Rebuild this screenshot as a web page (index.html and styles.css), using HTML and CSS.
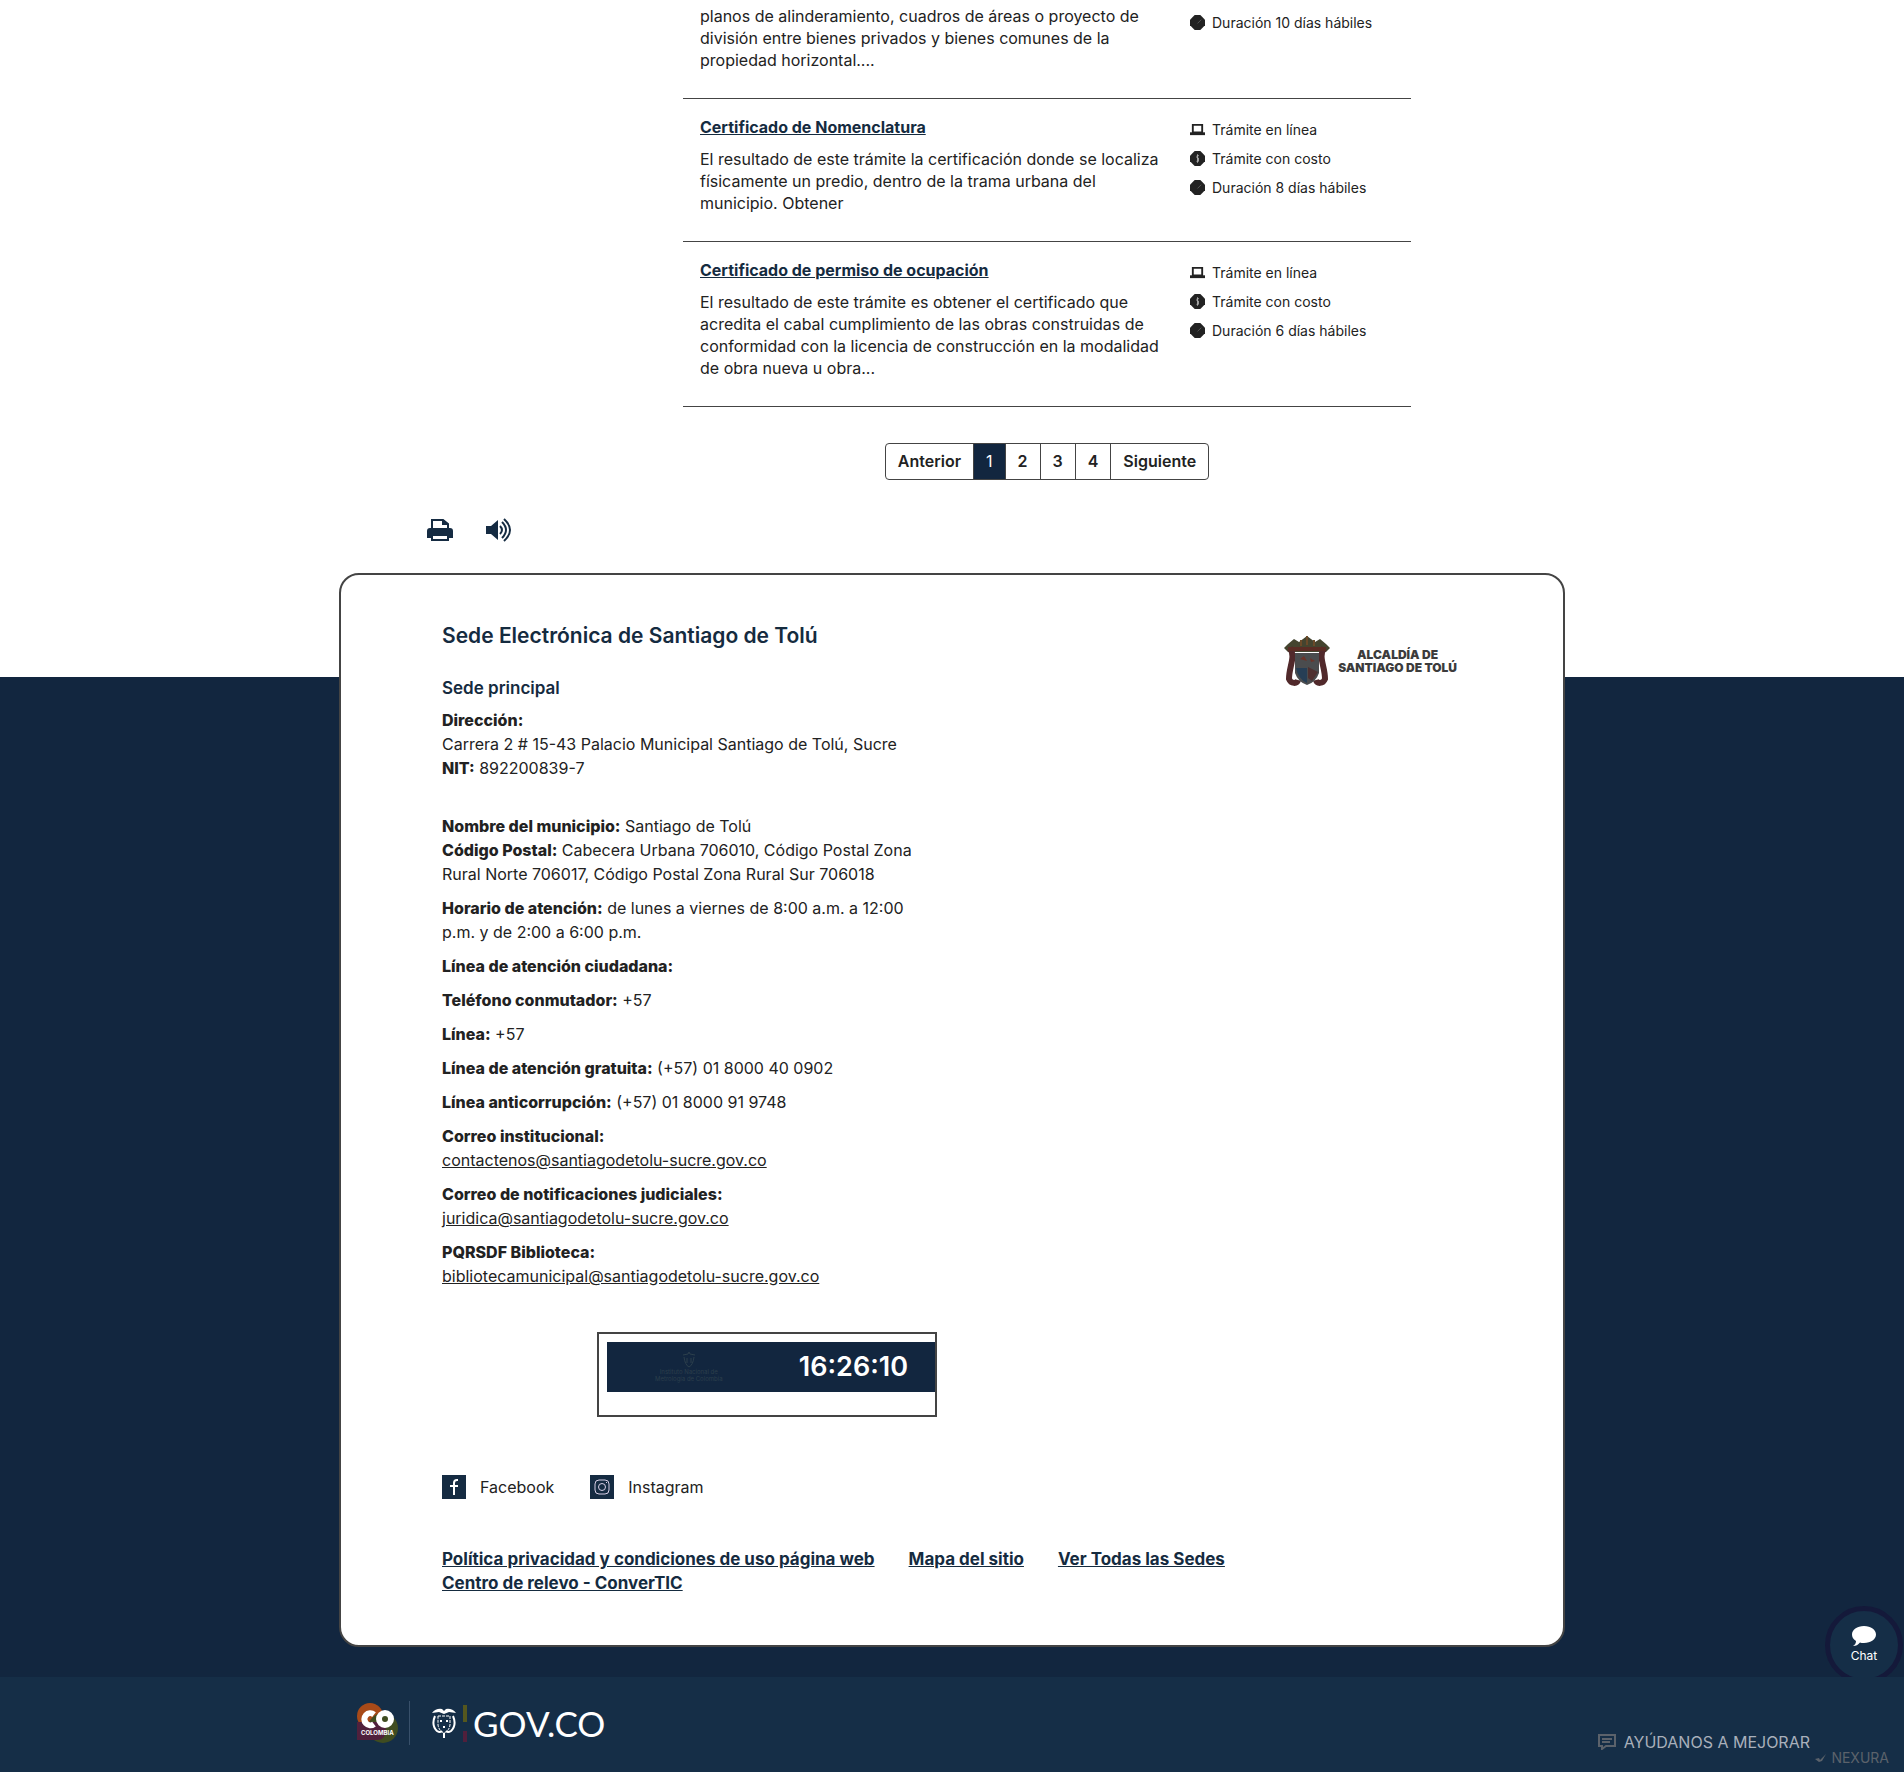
FILE: index.html
```html
<!DOCTYPE html>
<html lang="es">
<head>
<meta charset="utf-8">
<meta name="viewport" content="width=device-width, initial-scale=1">
<title>Trámites - Santiago de Tolú</title>
<link rel="stylesheet" href="styles.css">
</head>
<body>
<svg class="sprite" aria-hidden="true">
  <symbol id="laptop" viewBox="0 0 16 16"><path d="M3 3h10v8H3z" fill="none" stroke="currentColor" stroke-width="2"/><path d="M0 11h16v3H0z"/></symbol>
  <symbol id="cost" viewBox="0 0 16 16"><path d="M5 0h6l5 5v6l-5 5H5l-5-5V5z"/><path d="M9.500 5H7.500v2.500h1.500V11H7M8 3.500v9" fill="none" stroke="#aaa"/></symbol>
  <symbol id="clock" viewBox="0 0 16 16"><path d="M5 0h6l5 5v6l-5 5H5l-5-5V5z"/><path d="M8 9l4-4" fill="none" stroke="#555"/></symbol>
</svg>
<main class="container">
  <div class="results">
    <article class="item item-first">
      <p class="item-text">planos de alinderamiento, cuadros de áreas o proyecto de<br>división entre bienes privados y bienes comunes de la<br>propiedad horizontal....</p>
      <ul class="meta"><li><svg><use href="#clock"/></svg>Duración 10 días hábiles</li></ul>
    </article>
    <article class="item">
      <div>
        <h3 class="item-title"><a href="#">Certificado de Nomenclatura</a></h3>
        <p class="item-text">El resultado de este trámite la certificación donde se localiza<br>físicamente un predio, dentro de la trama urbana del<br>municipio. Obtener</p>
      </div>
      <ul class="meta">
        <li><svg><use href="#laptop"/></svg>Trámite en línea</li>
        <li><svg><use href="#cost"/></svg>Trámite con costo</li>
        <li><svg><use href="#clock"/></svg>Duración 8 días hábiles</li>
      </ul>
    </article>
    <article class="item">
      <div>
        <h3 class="item-title"><a href="#">Certificado de permiso de ocupación</a></h3>
        <p class="item-text">El resultado de este trámite es obtener el certificado que<br>acredita el cabal cumplimiento de las obras construidas de<br>conformidad con la licencia de construcción en la modalidad<br>de obra nueva u obra...</p>
      </div>
      <ul class="meta">
        <li><svg><use href="#laptop"/></svg>Trámite en línea</li>
        <li><svg><use href="#cost"/></svg>Trámite con costo</li>
        <li><svg><use href="#clock"/></svg>Duración 6 días hábiles</li>
      </ul>
    </article>
    <nav class="pager" aria-label="Paginación">
      <a href="#">Anterior</a><a href="#" class="current" aria-current="page">1</a><a href="#">2</a><a href="#">3</a><a href="#">4</a><a href="#">Siguiente</a>
    </nav>
  </div>
  <div class="tools">
    <button type="button" aria-label="Imprimir"><svg viewBox="0 0 26 24"><path d="M5 11V2h11l5 4v5" fill="none" stroke="currentColor" stroke-width="2"/><path d="M15 1v6h7z"/><path d="M3 10h20q3 0 3 3v7h-5v-3H5v3H0v-7q0-3 3-3z"/><path d="M5 17h16v5H5z" fill="#fff" stroke="currentColor" stroke-width="2"/></svg></button>
    <button type="button" aria-label="Escuchar"><svg viewBox="0 0 26 24"><path d="M0 8h5l7-6v20l-7-6H0z"/><path d="M14 8q4 4 0 8M16 4q8 8 0 16M18 1q12 11 0 22" fill="none" stroke="currentColor" stroke-width="2"/></svg></button>
  </div>
</main>
<footer class="footer">
  <section class="card">
    <div class="card-head">
      <h2>Sede Electrónica de Santiago de Tolú</h2>
      <div class="city-logo">
        <svg viewBox="0 0 46 50" aria-hidden="true"><path d="M4 8l6-5 5 3 4-3 4-3 4 3 4 3 5-3 6 5 4 4-4 4H4l-4-4z" fill="#44442f"/><path d="M6 12c6 9-1 18-1 31 2 5 8 5 9 1M40 12c-6 9 1 18 1 31-2 5-8 5-9 1" fill="none" stroke="#51292b" stroke-width="6"/><path d="M4 13h38" stroke="#5a2c24" stroke-width="4"/><path d="M11 17h24v20q-3 9-12 12-9-3-12-12z" fill="#4a4c4e"/><path d="M12 32h11v15q-9-4-11-15z" fill="#263e55"/><path d="M24 31l10 5-6 9-4-3z" fill="#4e3030"/><path d="M16 23l4-3 3 5zM26 22l5 3-4 1z" fill="#6b342a"/><path d="M23 0v9M17 4v6M30 4v6" stroke="#6b4a29" stroke-width="2"/></svg>
        <p>ALCALDÍA DE<br>SANTIAGO DE TOLÚ</p>
      </div>
    </div>
    <div class="info">
      <h3>Sede principal</h3>
      <p class="address"><b>Dirección:</b><br>Carrera 2 # 15-43 Palacio Municipal Santiago de Tolú, Sucre<br><b>NIT:</b> 892200839-7</p>
      <p><b>Nombre del municipio:</b> Santiago de Tolú<br><b>Código Postal:</b> Cabecera Urbana 706010, Código Postal Zona<br>Rural Norte 706017, Código Postal Zona Rural Sur 706018</p>
      <p><b>Horario de atención:</b> de lunes a viernes de 8:00 a.m. a 12:00<br>p.m. y de 2:00 a 6:00 p.m.</p>
      <p><b>Línea de atención ciudadana:</b></p>
      <p><b>Teléfono conmutador:</b> +57</p>
      <p><b>Línea:</b> +57</p>
      <p><b>Línea de atención gratuita:</b> (+57) 01 8000 40 0902</p>
      <p><b>Línea anticorrupción:</b> (+57) 01 8000 91 9748</p>
      <p><b>Correo institucional:</b><br><a href="#">contactenos@santiagodetolu-sucre.gov.co</a></p>
      <p><b>Correo de notificaciones judiciales:</b><br><a href="#">juridica@santiagodetolu-sucre.gov.co</a></p>
      <p><b>PQRSDF Biblioteca:</b><br><a href="#">bibliotecamunicipal@santiagodetolu-sucre.gov.co</a></p>
      <div class="clock-frame">
        <div class="clock">
          <div class="institute"><svg viewBox="0 0 14 16" aria-hidden="true"><path d="M1 3l5-1 1-2 1 2 5 1M2 5q1 8 5 10 4-2 5-10M5 6v5M9 6v5" fill="none" stroke="currentColor"/></svg><span>Instituto Nacional de<br>Metrología de Colombia</span></div>
          <time>16:26:10</time>
        </div>
      </div>
    </div>
    <div class="social">
      <a href="#"><svg viewBox="0 0 24 24" aria-hidden="true"><path fill="#152b42" d="M0 0h24v24H0z"/><path d="M16 5h-1q-3 0-3 3v12M8 11h8" fill="none" stroke="#fff" stroke-width="2"/></svg>Facebook</a>
      <a href="#"><svg viewBox="0 0 24 24" aria-hidden="true"><path fill="#152b42" d="M0 0h24v24H0z"/><g fill="none" stroke="#d8cfe6"><rect x="5" y="5" width="14" height="14" rx="4"/><circle cx="12" cy="12" r="3.500"/><path d="M16 7.500h1"/></g></svg>Instagram</a>
    </div>
    <nav class="links" aria-label="Enlaces de la sede">
      <a href="#">Política privacidad y condiciones de uso página web</a>
      <a href="#">Mapa del sitio</a>
      <a href="#">Ver Todas las Sedes</a>
      <a href="#">Centro de relevo - ConverTIC</a>
    </nav>
  </section>
  <button type="button" class="chat"><svg viewBox="0 0 24 20" aria-hidden="true"><path d="M12 0c7 0 12 4 12 8.500S19 17 12 17c-2 0-3 0-4-.5C6 19 4 20 1 20c2-1 3-3 3-5-3-2-4-4-4-6.500C0 4 5 0 12 0z"/></svg>Chat</button>
  <div class="govbar">
    <div class="container gov">
      <svg class="co" viewBox="0 0 42 42" role="img" aria-label="CO Colombia"><circle cx="14" cy="14" r="13" fill="#a84a18"/><circle cx="27" cy="26" r="15" fill="#3f4c20"/><path d="M1 20h20q9 0 9 9-1 9-9 9H1z" fill="#50203c"/><g fill="none" stroke="#fff" stroke-width="6"><path d="M18 12.500a6 6 0 1 0 0 9.500"/><circle cx="29" cy="17" r="6"/></g><text x="5" y="33" class="co-text">COLOMBIA</text></svg>
      <span class="divider"></span>
      <svg class="arms" viewBox="0 0 26 32" aria-hidden="true"><path d="M1 6Q5 1 11 2l2 2 2-2q6-1 10 4l-7-1-5 2-5-2z" fill="#fff"/><g fill="none" stroke="#fff" stroke-width="2"><path d="M4 9q-4 9 2 15 3 2 5 0M22 9q4 9-2 15-3 2-5 0"/><path d="M7 9h12v9q-1 6-6 8-5-2-6-8z" stroke-dasharray="3 1" stroke-width="1"/><path d="M9 14h2m4 0h2M12 20h2M13 26v5"/></g></svg>
      <span class="flag"></span>
      <span class="gov-name">GOV.CO</span>
    </div>
    <a class="improve" href="#"><svg viewBox="0 0 18 16" aria-hidden="true"><path d="M1 1h16v11H8l-4 3v-3H1zM4 5h10M4 8h8" fill="none" stroke="currentColor" stroke-width="2"/></svg>AYÚDANOS A MEJORAR</a>
    <a class="nexura" href="#"><svg viewBox="0 0 12 8" aria-hidden="true"><path d="M0 5l4-1 1 2 6-6-4 7-3 1z"/></svg>NEXURA</a>
  </div>
</footer>
</body>
</html>
```
FILE: styles.css
```css
* { box-sizing: border-box; }
body { margin: 0; background: #fff; color: #222; font: 16px/24px Inter, "Liberation Sans", sans-serif; }
h2, h3, p, ul { margin: 0; padding: 0; }
a { color: inherit; }
button { border: 0; padding: 0; background: none; font: inherit; color: inherit; cursor: pointer; }
.sprite { display: none; }
svg { fill: currentColor; flex: none; }

.container { max-width: 1224px; margin: 0 auto; }
.results { max-width: 728px; margin-left: 343px; }
.item { display: grid; grid-template-columns: 490px 1fr; padding: 16px 0 27px 17px; border-bottom: 1px solid #444; }
.item-first { padding-top: 5px; }
.item-title { font-size: 16px; line-height: 24px; font-weight: 700; margin-bottom: 9px; color: #152b3f; }
.item-text { line-height: 22px; white-space: nowrap; }
.meta { list-style: none; font-size: 14px; line-height: 29px; }
.meta li { display: flex; align-items: center; gap: 7px; }
.meta svg { width: 15px; height: 15px; }
.item-first .meta { padding-top: 3px; }
.pager { display: flex; width: max-content; margin: 36px auto 0; border: 1px solid #444; border-radius: 4px; font-weight: 600; line-height: 35px; }
.pager a { padding: 0 12px; text-decoration: none; border-right: 1px solid #444; }
.pager a:last-child { border-right: 0; }
.pager .current { background: #12263f; color: #fff; font-weight: 400; }
.tools { display: flex; gap: 33px; padding: 38px 0 0 87px; height: 93px; color: #152b42; }
.tools button { width: 26px; height: 24px; }
.tools svg { display: block; width: 26px; height: 24px; }

.footer { position: relative; display: flow-root; margin-top: 104px; background: #12263f; }
.card { max-width: 1226px; margin: -104px auto 0; background: #fff; border: 2px solid #444; border-radius: 20px; padding: 49px 106px 50px 101px; }
.card-head { display: flex; justify-content: space-between; height: 52px; }
h2 { font-size: 21px; line-height: 24px; font-weight: 600; color: #152b3f; }
.city-logo { display: flex; align-items: center; gap: 8px; height: 50px; margin-top: 12px; }
.city-logo svg { width: 46px; height: 50px; }
.city-logo p { font-size: 12px; line-height: 13px; font-weight: 900; text-align: center; color: #3c3c3c; }
.info { width: 495px; }
.info h3 { font-size: 17px; line-height: 24px; font-weight: 600; color: #152b3f; margin-bottom: 8px; }
.info p { white-space: nowrap; margin-bottom: 10px; }
.info .address { margin-bottom: 34px; }
b { font-weight: 800; }
.clock-frame { width: 340px; height: 85px; margin: 44px 0 0 auto; padding: 8px 0 0 8px; border: 2px solid #444; }
.clock { display: flex; align-items: center; justify-content: space-between; height: 50px; padding: 0 27px 0 48px; background: #12263f; color: #fff; }
.clock time { font-size: 27px; font-weight: 600; }
.institute { display: flex; flex-direction: column; align-items: center; font-size: 6px; line-height: 7px; text-align: center; color: #2c3f4c; }
.institute svg { width: 14px; height: 16px; }
.social { display: flex; gap: 36px; margin-top: 58px; }
.social a { display: flex; align-items: center; gap: 14px; text-decoration: none; }
.social svg { width: 24px; height: 24px; }
.links { display: flex; flex-wrap: wrap; column-gap: 34px; margin-top: 48px; max-width: 800px; font-size: 17px; font-weight: 700; color: #152b3f; }

.chat { position: absolute; right: 1px; bottom: 88px; width: 78px; height: 78px; border: 5px solid #14193a; border-radius: 50%; background: #152e47; color: #fff; font-size: 12px; line-height: 16px; display: flex; flex-direction: column; align-items: center; justify-content: center; gap: 2px; }
.chat svg { width: 24px; height: 20px; }
.govbar { position: relative; z-index: 1; height: 95px; margin-top: 30px; background: #152e47; }
.gov { display: flex; align-items: center; height: 92px; padding-left: 16px; color: #fff; }
.co { width: 42px; height: 42px; }
.co-text { font-size: 6px; font-weight: 700; fill: #fff; }
.divider { width: 1px; height: 44px; margin: 0 21px 0 11px; background: #38506a; }
.arms { width: 26px; height: 32px; }
.flag { width: 4px; height: 37px; margin: 0 6px; background: linear-gradient(#55571e 45%, transparent 45% 70%, #50203c 70%); }
.gov-name { font: 35px/40px Lato, sans-serif; }
.improve { position: absolute; right: 94px; bottom: 20px; display: flex; align-items: center; gap: 8px; font-size: 16px; line-height: 20px; text-decoration: none; color: #a9b0bb; }
.improve svg { width: 18px; height: 16px; color: #5b626b; }
.nexura { position: absolute; right: 15px; bottom: 4px; display: flex; align-items: center; gap: 4px; font-size: 14px; line-height: 20px; text-decoration: none; color: #5b626b; }
.nexura svg { width: 12px; height: 8px; }
```
